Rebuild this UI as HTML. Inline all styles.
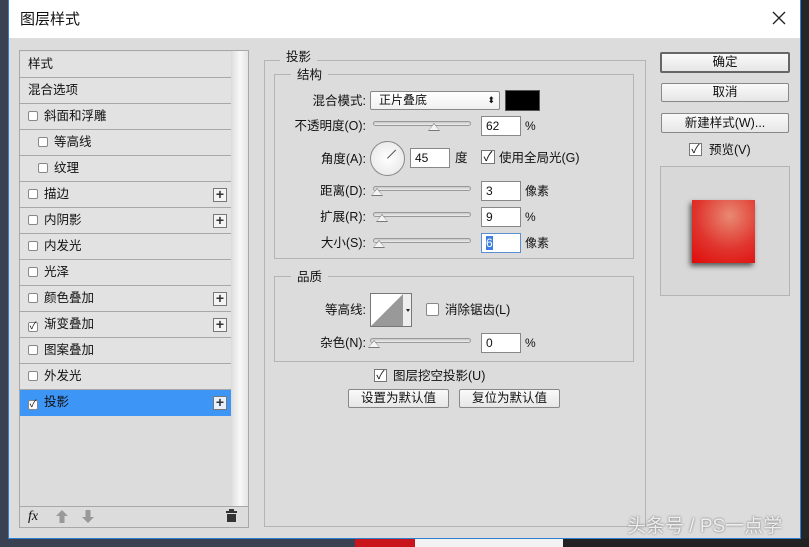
<!DOCTYPE html>
<html><head><meta charset="utf-8">
<style>
*{box-sizing:border-box;margin:0;padding:0}
body{width:809px;height:547px;overflow:hidden;background:#3a4152;font-family:"Liberation Sans","Noto Sans CJK SC",sans-serif;font-size:12px;line-height:15px;color:#111;position:relative}
.a{position:absolute}
#dlg{left:8px;top:0;width:793px;height:539px;background:#dcdcdc;border:1px solid #2d7fd0;border-top:none}
#title{left:0;top:0;width:791px;height:38px;background:#fff}
.row{position:absolute;left:20px;width:211px;height:26px;border-bottom:1px solid #a8a8a8;background:#e2e2e2;line-height:25px;padding-left:8px;font-size:12.5px}
.cb{display:inline-block;width:10px;height:10px;border:1px solid #888;background:#fff;border-radius:2px;vertical-align:-1px;margin-right:6px;font-size:10px;line-height:8px;text-align:center}
.plus{position:absolute;right:4px;top:6px;width:14px;height:14px;border:1px solid #777;background:#f4f4f4;font-size:14px;line-height:11px;text-align:center;font-weight:bold;color:#333}
.grp{position:absolute;border:1px solid #b4b4b4}
.leg{position:absolute;background:#dcdcdc;padding:0 6px;font-size:12.5px}
.lbl{position:absolute;text-align:right;font-size:12.5px}
.inp{position:absolute;background:#fff;border:1px solid #888;height:20px;line-height:18px;padding-left:4px;font-size:12px}
.sl{position:absolute;height:5px;border:1px solid #999;border-radius:3px;background:linear-gradient(#c8c8c8,#eee)}
.th{position:absolute;width:0;height:0;border-left:6px solid transparent;border-right:6px solid transparent;border-bottom:8px solid #777}
.th:after{content:"";position:absolute;left:-5px;top:1px;border-left:5px solid transparent;border-right:5px solid transparent;border-bottom:6px solid #f4f4f4}
.btn{position:absolute;background:linear-gradient(#fafafa,#e6e6e6);border:1px solid #888;border-radius:2px;text-align:center;font-size:12.5px}
</style></head><body>
<div class="a" style="left:355px;top:538px;width:60px;height:9px;background:#c8141a"></div>
<div class="a" style="left:415px;top:538px;width:148px;height:9px;background:#f2f2f2"></div>
<div class="a" style="left:563px;top:538px;width:246px;height:9px;background:#222"></div>
<div class="a" style="left:801px;top:0;width:8px;height:538px;background:#262626"></div>
<div class="a" id="dlg">
<div class="a" id="title"></div>
</div>
<div class="a" style="left:20px;top:11px;font-size:15px;line-height:18px">图层样式</div>
<svg class="a" style="left:772px;top:11px" width="14" height="14"><path d="M1 1L13 13M13 1L1 13" stroke="#222" stroke-width="1.3"/></svg>

<!-- left panel -->
<div class="a" style="left:19px;top:50px;width:230px;height:478px;border:1px solid #a8a8a8;background:#dcdcdc"></div>
<div class="a" style="left:232px;top:51px;width:16px;height:456px;background:linear-gradient(90deg,#e0e0e0,#f8f8f8,#e4e4e4)"></div>
<div class="row" style="top:52px">样式</div>
<div class="row" style="top:78px">混合选项</div>
<div class="row" style="top:104px"><span class="cb"></span>斜面和浮雕</div>
<div class="row" style="top:130px;padding-left:18px"><span class="cb"></span>等高线</div>
<div class="row" style="top:156px;padding-left:18px"><span class="cb"></span>纹理</div>
<div class="row" style="top:182px"><span class="cb"></span>描边<span class="plus">+</span></div>
<div class="row" style="top:208px"><span class="cb"></span>内阴影<span class="plus">+</span></div>
<div class="row" style="top:234px"><span class="cb"></span>内发光</div>
<div class="row" style="top:260px"><span class="cb"></span>光泽</div>
<div class="row" style="top:286px"><span class="cb"></span>颜色叠加<span class="plus">+</span></div>
<div class="row" style="top:312px"><span class="cb">✓</span>渐变叠加<span class="plus">+</span></div>
<div class="row" style="top:338px"><span class="cb"></span>图案叠加</div>
<div class="row" style="top:364px"><span class="cb"></span>外发光</div>
<div class="row" style="top:390px;background:#3d95f5;border-bottom:none"><span class="cb">✓</span>投影<span class="plus" style="background:#e8f0fb">+</span></div>
<div class="a" style="left:20px;top:506px;width:228px;height:1px;background:#a8a8a8"></div>
<div class="a" style="left:28px;top:509px;font-style:italic;font-family:'Liberation Serif',serif;font-size:14px">fx</div>
<svg class="a" style="left:56px;top:510px" width="12" height="13"><path d="M6 0L12 6H8.5V13H3.5V6H0Z" fill="#999"/></svg>
<svg class="a" style="left:82px;top:510px" width="12" height="13"><path d="M6 13L12 7H8.5V0H3.5V7H0Z" fill="#999"/></svg>
<svg class="a" style="left:226px;top:509px" width="11" height="13"><rect x="3" y="0" width="5" height="2" fill="#333"/><rect x="0" y="2" width="11" height="2" fill="#333"/><rect x="1" y="5" width="9" height="8" fill="#333"/></svg>

<!-- middle -->
<div class="grp" style="left:264px;top:60px;width:382px;height:467px"></div>
<div class="leg" style="left:280px;top:50px">投影</div>
<div class="grp" style="left:274px;top:74px;width:360px;height:185px"></div>
<div class="leg" style="left:291px;top:68px">结构</div>
<div class="lbl" style="left:280px;top:94px;width:86px">混合模式:</div>
<div class="inp" style="left:370px;top:91px;width:130px;height:19px;border-radius:2px;background:linear-gradient(#fff,#f0f0f0);padding-left:8px;line-height:17px">正片叠底<span style="position:absolute;right:4px;top:0;font-size:9px">⬍</span></div>
<div class="a" style="left:505px;top:90px;width:35px;height:21px;background:#000;border:1px solid #555"></div>
<div class="lbl" style="left:280px;top:119px;width:86px">不透明度(O):</div>
<div class="sl" style="left:373px;top:121px;width:98px"></div><div class="th" style="left:428px;top:123px"></div>
<div class="inp" style="left:481px;top:116px;width:40px">62</div><div class="a" style="left:525px;top:119px">%</div>
<div class="lbl" style="left:280px;top:152px;width:86px">角度(A):</div>
<div class="a" style="left:370px;top:141px;width:35px;height:35px;border-radius:50%;border:1px solid #888;background:radial-gradient(#fff,#e4e4e4)"></div>
<div class="a" style="left:387px;top:158px;width:12px;height:1px;background:#555;transform:rotate(-45deg);transform-origin:0 0"></div>
<div class="inp" style="left:410px;top:148px;width:40px">45</div><div class="a" style="left:455px;top:151px;font-size:12.5px">度</div>
<div class="a" style="left:481px;top:150px;width:14px;height:14px;border:1px solid #777;background:#fff;font-size:13px;line-height:12px;text-align:center">✓</div>
<div class="a" style="left:499px;top:151px;font-size:12.5px">使用全局光(G)</div>
<div class="lbl" style="left:280px;top:184px;width:86px">距离(D):</div>
<div class="sl" style="left:373px;top:186px;width:98px"></div><div class="th" style="left:371px;top:188px"></div>
<div class="inp" style="left:481px;top:181px;width:40px">3</div><div class="a" style="left:525px;top:184px">像素</div>
<div class="lbl" style="left:280px;top:210px;width:86px">扩展(R):</div>
<div class="sl" style="left:373px;top:212px;width:98px"></div><div class="th" style="left:376px;top:214px"></div>
<div class="inp" style="left:481px;top:207px;width:40px">9</div><div class="a" style="left:525px;top:210px">%</div>
<div class="lbl" style="left:280px;top:236px;width:86px">大小(S):</div>
<div class="sl" style="left:373px;top:238px;width:98px"></div><div class="th" style="left:373px;top:240px"></div>
<div class="inp" style="left:481px;top:233px;width:40px;border-color:#5a8fd0"><span style="background:#3d7fe0;color:#fff">6</span></div><div class="a" style="left:525px;top:236px">像素</div>

<div class="grp" style="left:274px;top:276px;width:360px;height:86px"></div>
<div class="leg" style="left:291px;top:270px">品质</div>
<div class="lbl" style="left:280px;top:303px;width:86px">等高线:</div>
<div class="a" style="left:370px;top:293px;width:42px;height:34px;border:1px solid #777;background:#fff;overflow:hidden">
<svg width="42" height="34" style="position:absolute;left:0;top:0"><polygon points="0,32 32,0 32,34 0,34" fill="#999"/><rect x="32" y="0" width="10" height="34" fill="#eee"/><polygon points="35,15 39,15 37,18" fill="#222"/></svg></div>
<div class="a" style="left:426px;top:303px;width:13px;height:13px;border:1px solid #888;background:#fff;border-radius:2px"></div>
<div class="a" style="left:445px;top:303px;font-size:12.5px">消除锯齿(L)</div>
<div class="lbl" style="left:280px;top:336px;width:86px">杂色(N):</div>
<div class="sl" style="left:370px;top:338px;width:101px"></div><div class="th" style="left:368px;top:340px"></div>
<div class="inp" style="left:481px;top:333px;width:40px">0</div><div class="a" style="left:525px;top:336px">%</div>
<div class="a" style="left:374px;top:369px;width:13px;height:13px;border:1px solid #777;background:#fff;font-size:12px;line-height:11px;text-align:center">✓</div>
<div class="a" style="left:393px;top:369px;font-size:12.5px">图层挖空投影(U)</div>
<div class="btn" style="left:348px;top:389px;width:101px;height:19px;line-height:17px">设置为默认值</div>
<div class="btn" style="left:459px;top:389px;width:101px;height:19px;line-height:17px">复位为默认值</div>

<!-- right -->
<div class="btn" style="left:660px;top:52px;width:130px;height:21px;line-height:17px;border:2px solid #666">确定</div>
<div class="btn" style="left:661px;top:83px;width:128px;height:19px;line-height:17px">取消</div>
<div class="btn" style="left:661px;top:113px;width:128px;height:20px;line-height:18px">新建样式(W)...</div>
<div class="a" style="left:689px;top:143px;width:13px;height:13px;border:1px solid #777;background:#fff;font-size:12px;line-height:11px;text-align:center">✓</div>
<div class="a" style="left:709px;top:143px;font-size:12.5px">预览(V)</div>
<div class="a" style="left:660px;top:166px;width:130px;height:130px;border:1px solid #b4b4b4;background:#d8d8d8"></div>
<div class="a" style="left:692px;top:200px;width:63px;height:63px;background:radial-gradient(circle at 60% 25%,#e88a72,#e0352e 55%,#e00a0a);box-shadow:-2px 3px 5px rgba(0,0,0,.6)"></div>

<div class="a" style="left:627px;top:516px;font-size:19px;line-height:22px;color:#eee;text-shadow:0 0 2px #666">头条号 / PS一点学</div>
</body></html>
